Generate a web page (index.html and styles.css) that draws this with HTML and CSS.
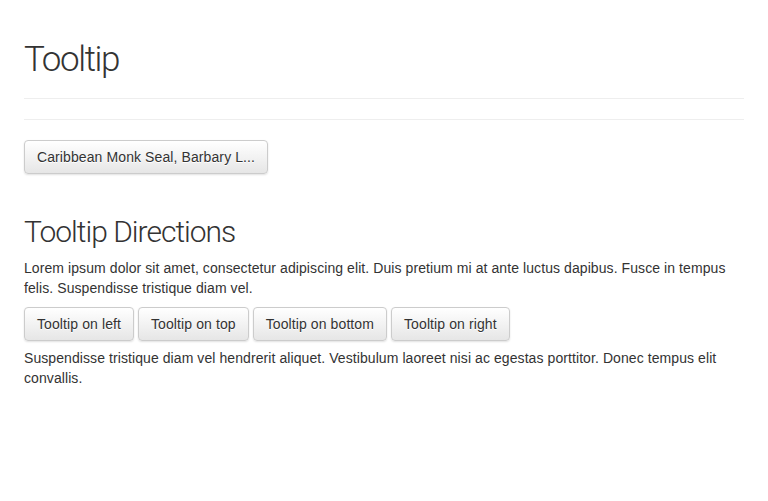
FILE: index.html
```html
<!DOCTYPE html>
<html>
<head>
<meta charset="utf-8">
<link rel="stylesheet" href="styles.css">
</head>
<body>
<div class="container">
  <h1 class="page-title">Tooltip</h1>
  <hr class="divider">
  <div class="single-row">
    <button class="btn">Caribbean Monk Seal, Barbary L...</button>
  </div>
  <h2 class="section-title">Tooltip Directions</h2>
  <p class="text">Lorem ipsum dolor sit amet, consectetur adipiscing elit. Duis pretium mi at ante luctus dapibus. Fusce in tempus felis. Suspendisse tristique diam vel.</p>
  <div class="btn-row">
    <button class="btn">Tooltip on left</button>
    <button class="btn">Tooltip on top</button>
    <button class="btn">Tooltip on bottom</button>
    <button class="btn">Tooltip on right</button>
  </div>
  <p class="text">Suspendisse tristique diam vel hendrerit aliquet. Vestibulum laoreet nisi ac egestas porttitor. Donec tempus elit convallis.</p>
</div>
</body>
</html>
```

FILE: styles.css
```css
html, body {
  margin: 0;
  padding: 0;
  background: #fff;
}
body {
  font-family: "Liberation Sans", Arial, sans-serif;
  font-size: 14px;
  line-height: 20px;
  color: #333;
  letter-spacing: 0.08px;
}
.container {
  padding: 40px 24px 0 24px;
}
.page-title {
  font-family: Roboto, "Liberation Sans", sans-serif;
  font-weight: 300;
  font-size: 35px;
  line-height: 40px;
  letter-spacing: -1.4px;
  margin: 0;
  padding-bottom: 18px;
  border-bottom: 1px solid #eee;
  color: #333;
}
.divider {
  border: 0;
  border-top: 1px solid #eee;
  margin: 20px 0;
  height: 0;
}
.single-row {
  display: flex;
}
.btn {
  font-family: "Liberation Sans", Arial, sans-serif;
  font-size: 14px;
  line-height: 20px;
  letter-spacing: 0.1px;
  color: #333;
  padding: 6px 12px;
  border: 1px solid #ccc;
  border-radius: 4px;
  background: linear-gradient(to bottom, #fff 0%, #e6e6e6 100%);
  box-shadow: inset 0 1px 0 rgba(255,255,255,.15), 0 1px 2px rgba(0,0,0,.12);
  text-shadow: 0 1px 0 #fff;
  margin: 0;
  cursor: pointer;
}
.section-title {
  font-family: Roboto, "Liberation Sans", sans-serif;
  font-weight: 300;
  font-size: 30px;
  line-height: 33px;
  letter-spacing: -1px;
  margin: 41px 0 10px 0;
  color: #333;
}
.text {
  margin: 0 0 9px 0;
}
.btn-row {
  display: flex;
  gap: 4px;
  margin-bottom: 7px;
}
```
